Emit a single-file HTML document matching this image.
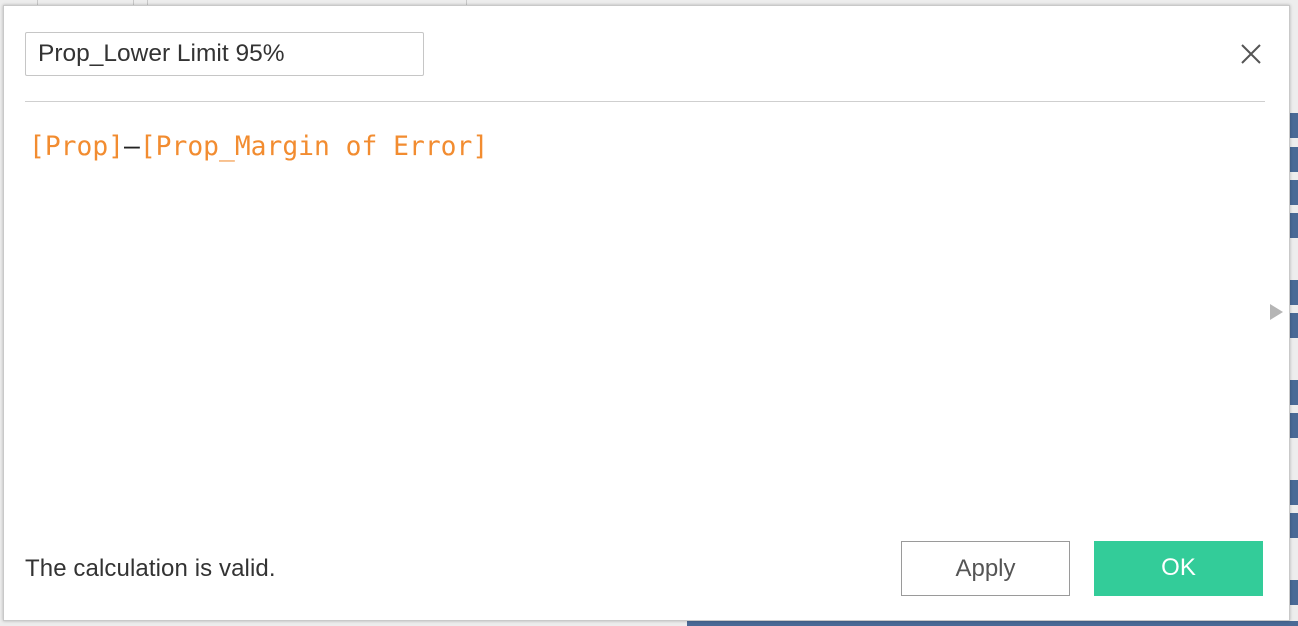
<!DOCTYPE html>
<html><head><style>
body{margin:0;width:1298px;height:626px;background:#ededed;position:relative;overflow:hidden;font-family:"Liberation Sans",sans-serif}
.vl{position:absolute;top:0;height:6px;width:1px;background:#c8c8c8}
.bar{position:absolute;left:1290px;width:8px;height:25px;background:#4a6a96}
.dlg{position:absolute;left:3px;top:5px;width:1285px;height:614px;background:#fff;border:1px solid #c9c9c9;box-shadow:0 0 3px rgba(0,0,0,.25)}
.inp{position:absolute;left:21px;top:26px;border:1px solid #c6c6c6;border-radius:2px;font-size:24.5px;color:#333;line-height:42px;padding-left:12px;box-sizing:border-box;width:399px;height:44px}
.sep{position:absolute;left:21px;top:95px;width:1240px;height:1px;background:#cfcfcf}
.f{position:absolute;left:25px;top:126px;font-family:"DejaVu Sans Mono","Liberation Mono",monospace;font-size:26.3px;color:#f28c30;white-space:pre}
.f b{color:#222;font-weight:normal}
.msg{position:absolute;left:21px;top:549px;font-size:24px;color:#333;letter-spacing:0.1px}
.btn{position:absolute;top:535px;width:169px;height:55px;box-sizing:border-box;font-size:24px;text-align:center;line-height:53px}
</style></head><body>
<div class="vl" style="left:37px"></div><div class="vl" style="left:133px"></div><div class="vl" style="left:147px"></div><div class="vl" style="left:466px"></div>
<div class="bar" style="top:113px"></div><div class="bar" style="top:147px"></div><div class="bar" style="top:180px"></div><div class="bar" style="top:213px"></div><div class="bar" style="top:280px"></div><div class="bar" style="top:313px"></div><div class="bar" style="top:380px"></div><div class="bar" style="top:413px"></div><div class="bar" style="top:480px"></div><div class="bar" style="top:513px"></div><div class="bar" style="top:580px"></div>
<div style="position:absolute;left:687px;top:621px;width:611px;height:5px;background:#4a6a96"></div>
<div class="dlg">
<div class="inp">Prop_Lower Limit 95%</div>
<svg style="position:absolute;left:1236px;top:37px" width="22" height="22"><path d="M2 2L20 20M20 2L2 20" stroke="#555" stroke-width="2"/></svg>
<div class="sep"></div>
<div class="f">[Prop]<b>–</b>[Prop_Margin of Error]</div>
<svg style="position:absolute;left:1266px;top:298px" width="14" height="18"><path d="M0 0L13 8L0 16Z" fill="#b5b5b5"/></svg>
<div class="msg">The calculation is valid.</div>
<div class="btn" style="left:897px;border:1px solid #9a9a9a;color:#555">Apply</div>
<div class="btn" style="left:1090px;background:#33cc99;color:#fff">OK</div>
</div>
</body></html>
